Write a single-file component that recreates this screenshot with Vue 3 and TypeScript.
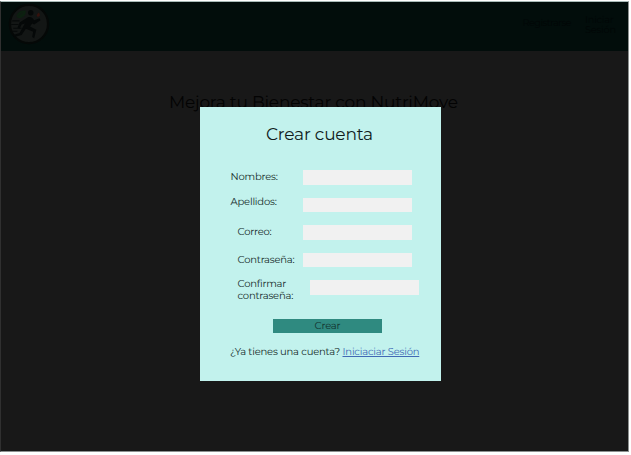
<script setup lang="ts">
import { ref } from 'vue'

interface Field {
  id: string
  lines: string[]
  type: string
}

const fields: Field[] = [
  { id: 'nombres', lines: ['Nombres:'], type: 'text' },
  { id: 'apellidos', lines: ['Apellidos:'], type: 'text' },
  { id: 'correo', lines: ['Correo:'], type: 'email' },
  { id: 'contrasena', lines: ['Contraseña:'], type: 'password' },
  { id: 'confirmar', lines: ['Confirmar', 'contraseña:'], type: 'password' },
]

const values = ref<Record<string, string>>({})
</script>

<template>
  <div class="screen">
    <header class="bar">
      <svg class="logo" viewBox="0 0 42 42">
        <circle cx="21" cy="21" r="18.2" fill="#131615" stroke="#050807" stroke-width="2.2" />
        <path d="M9 14c1-5 5-6 9-6 0 5-3 8-8 7z" fill="#0c2010" />
        <path d="M9 15l6-5" stroke="#131615" stroke-width=".6" />
        <circle cx="22.700" cy="10.200" r="2.600" fill="#050808" />
        <path d="M29 14c-1.500-2 .5-2.500 1-4 2 1.500 2 3.500 0 4z" fill="#35120d" />
        <path d="M20 14.500c3-1 5 1 6 3l5-2 1 2-6 4-2-1-2 3 6 3-2 8-2-1 1-5-7-3-4 6-7 2-1-2 6-2 5-9-3 1-2 4-2-1 2-5z" fill="#050808" />
        <path d="M5 18h7M4 21.500h7M6 25h8M5 28h5" stroke="#060909" stroke-width="1" />
      </svg>
      <nav class="nav">
        <a class="register">Registrarse</a>
        <a class="login">Iniciar<br />Sesión</a>
      </nav>
    </header>
    <h1 class="headline">Mejora tu Bienestar con NutriMove</h1>

    <form class="modal" @submit.prevent>
      <h2 class="title">Crear cuenta</h2>
      <div v-for="f in fields" :key="f.id" class="field" :class="f.id">
        <label :for="f.id"><span v-for="l in f.lines" :key="l">{{ l }}</span></label>
        <input :id="f.id" v-model="values[f.id]" :type="f.type" />
      </div>
      <button class="submit" type="submit"><span>Crear</span></button>
      <p class="foot"><span class="ask">¿Ya tienes una cuenta?</span><a>Iniciaciar Sesión</a></p>
    </form>
  </div>
</template>

<style>
body {
  background: #fff;
  overflow: hidden;
}
</style>

<style scoped>
.screen {
  box-sizing: border-box;
  position: relative;
  width: 629px;
  height: 451px;
  margin-top: 1px;
  border: 1px solid #8c908f;
  border-left-color: #303030;
  border-top-color: #a9bab8;
  background: #181818;
  font-family: Montserrat, Inter, "Noto Sans", sans-serif;
  text-rendering: geometricPrecision;
  letter-spacing: -0.2px;
  color: #142a29;
}
.bar {
  display: flex;
  justify-content: space-between;
  height: 48.500px;
  background: #020d0b;
}
.logo {
  width: 44px;
  height: 44px;
  margin: 0 0 0 6px;
}
.nav {
  display: flex;
  font-size: 9.800px;
  line-height: 10.500px;
  font-weight: 400;
  color: #010606;
}
.register {
  width: 62.500px;
  padding-top: 17px;
  letter-spacing: -0.6px;
}
.login {
  width: 43px;
  padding-top: 13.500px;
}
.headline {
  margin: 42px 0 0 168px;
  font-size: 17px;
  line-height: 21px;
  font-weight: 400;
  letter-spacing: -0.220px;
  white-space: nowrap;
  color: #030303;
}
.modal {
  position: absolute;
  left: 199px;
  top: 105px;
  box-sizing: border-box;
  width: 241px;
  height: 274px;
  padding-top: 17px;
  background: #c2f2ed;
}
.title {
  margin: 0 0 24px 66px;
  font-size: 17px;
  line-height: 22px;
  font-weight: 400;
  color: #101c1c;
}
.field {
  display: flex;
  height: 27.500px;
  padding-left: 30.500px;
}
label {
  width: 72px;
  padding-top: 1px;
  font-size: 10px;
  line-height: 12px;
  white-space: nowrap;
}
label span {
  display: block;
}
input {
  box-sizing: border-box;
  width: 109.500px;
  height: 14.500px;
  padding: 0 4px;
  border: 0;
  border-radius: 0;
  outline: 0;
  background: #f1f1f1;
  font: inherit;
  font-size: 9px;
}
.apellidos label {
  padding-top: 0;
  margin-top: -2px;
}
.correo label,
.contrasena label {
  width: 65px;
  padding-left: 7px;
}
.confirmar {
  padding-left: 37.500px;
}
.confirmar label {
  padding-top: 0;
  margin-top: -2px;
}
.submit {
  display: block;
  width: 109px;
  height: 14.500px;
  margin: 11px 0 0 73px;
  padding: 0;
  border: 0;
  background: #2f8a80;
  font: 10px/14px Montserrat, Inter, sans-serif;
  letter-spacing: -0.2px;
  text-rendering: geometricPrecision;
  color: #12302d;
}
.foot {
  display: flex;
  margin: 13px 0 0 30px;
  font-size: 10px;
  line-height: 12px;
  white-space: nowrap;
}
.ask {
  width: 112.500px;
}
.foot a {
  color: #4169b5;
  text-decoration: underline;
}
</style>
